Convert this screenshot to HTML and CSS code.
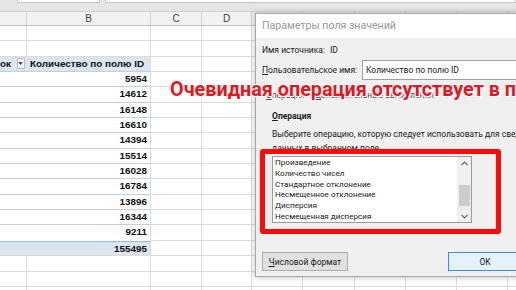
FILE: index.html
```html
<!DOCTYPE html>
<html lang="ru">
<head>
<meta charset="utf-8">
<title>Параметры поля значений</title>
<link rel="stylesheet" href="styles.css">
</head>
<body>
<div class="screen">
  <div class="sheet">
    <div class="toolbar">
      <div class="namebox"></div>
      <div class="formula"></div>
    </div>
    <div class="row colhead">
      <div class="c"></div><div class="c">B</div><div class="c">C</div><div class="c">D</div><div class="c">E</div><div class="c">F</div><div class="c">G</div><div class="c">H</div><div class="c">I</div><div class="c">J</div>
    </div>
    <div class="row"><div class="c"></div><div class="c"></div><div class="c"></div><div class="c"></div><div class="c"></div><div class="c"></div><div class="c"></div><div class="c"></div><div class="c"></div><div class="c"></div></div>
    <div class="row"><div class="c"></div><div class="c"></div><div class="c"></div><div class="c"></div><div class="c"></div><div class="c"></div><div class="c"></div><div class="c"></div><div class="c"></div><div class="c"></div></div>
    <div class="row pivot phead"><div class="c a">ок <span class="dd"><svg width="5" height="3" viewBox="0 0 5 3"><path d="M0 0H5L2.5 3Z" fill="#555"/></svg></span></div><div class="c b">Количество по полю ID</div><div class="c"></div><div class="c"></div><div class="c"></div><div class="c"></div><div class="c"></div><div class="c"></div><div class="c"></div><div class="c"></div></div>
    <div class="row pivot"><div class="c a"></div><div class="c b num">5954</div><div class="c"></div><div class="c"></div><div class="c"></div><div class="c"></div><div class="c"></div><div class="c"></div><div class="c"></div><div class="c"></div></div>
    <div class="row pivot"><div class="c a"></div><div class="c b num">14612</div><div class="c"></div><div class="c"></div><div class="c"></div><div class="c"></div><div class="c"></div><div class="c"></div><div class="c"></div><div class="c"></div></div>
    <div class="row pivot"><div class="c a"></div><div class="c b num">16148</div><div class="c"></div><div class="c"></div><div class="c"></div><div class="c"></div><div class="c"></div><div class="c"></div><div class="c"></div><div class="c"></div></div>
    <div class="row pivot"><div class="c a"></div><div class="c b num">16610</div><div class="c"></div><div class="c"></div><div class="c"></div><div class="c"></div><div class="c"></div><div class="c"></div><div class="c"></div><div class="c"></div></div>
    <div class="row pivot"><div class="c a"></div><div class="c b num">14394</div><div class="c"></div><div class="c"></div><div class="c"></div><div class="c"></div><div class="c"></div><div class="c"></div><div class="c"></div><div class="c"></div></div>
    <div class="row pivot"><div class="c a"></div><div class="c b num">15514</div><div class="c"></div><div class="c"></div><div class="c"></div><div class="c"></div><div class="c"></div><div class="c"></div><div class="c"></div><div class="c"></div></div>
    <div class="row pivot"><div class="c a"></div><div class="c b num">16028</div><div class="c"></div><div class="c"></div><div class="c"></div><div class="c"></div><div class="c"></div><div class="c"></div><div class="c"></div><div class="c"></div></div>
    <div class="row pivot"><div class="c a"></div><div class="c b num">16784</div><div class="c"></div><div class="c"></div><div class="c"></div><div class="c"></div><div class="c"></div><div class="c"></div><div class="c"></div><div class="c"></div></div>
    <div class="row pivot"><div class="c a"></div><div class="c b num">13896</div><div class="c"></div><div class="c"></div><div class="c"></div><div class="c"></div><div class="c"></div><div class="c"></div><div class="c"></div><div class="c"></div></div>
    <div class="row pivot"><div class="c a"></div><div class="c b num">16344</div><div class="c"></div><div class="c"></div><div class="c"></div><div class="c"></div><div class="c"></div><div class="c"></div><div class="c"></div><div class="c"></div></div>
    <div class="row pivot plast"><div class="c a"></div><div class="c b num">9211</div><div class="c"></div><div class="c"></div><div class="c"></div><div class="c"></div><div class="c"></div><div class="c"></div><div class="c"></div><div class="c"></div></div>
    <div class="row pivot ptotal"><div class="c a"></div><div class="c b num">155495</div><div class="c"></div><div class="c"></div><div class="c"></div><div class="c"></div><div class="c"></div><div class="c"></div><div class="c"></div><div class="c"></div></div>
    <div class="row"><div class="c"></div><div class="c"></div><div class="c"></div><div class="c"></div><div class="c"></div><div class="c"></div><div class="c"></div><div class="c"></div><div class="c"></div><div class="c"></div></div>
    <div class="row"><div class="c"></div><div class="c"></div><div class="c"></div><div class="c"></div><div class="c"></div><div class="c"></div><div class="c"></div><div class="c"></div><div class="c"></div><div class="c"></div></div>
    <div class="row"><div class="c"></div><div class="c"></div><div class="c"></div><div class="c"></div><div class="c"></div><div class="c"></div><div class="c"></div><div class="c"></div><div class="c"></div><div class="c"></div></div>
  </div>

  <div class="dialog">
    <div class="titlebar">Параметры поля значений</div>
    <div class="dbody">
      <div class="srcline"><span class="lbl">Имя источника:</span><span>ID</span></div>
      <div class="nameline"><span class="lbl2"><u>П</u>ользовательское имя:</span><div class="input">Количество по полю ID</div></div>
      <div class="tabs"><span class="tab active"><u>О</u>перация</span><span class="tab"><u>Д</u>ополнительные вычисления</span></div>
      <div class="panel">
        <div class="group"><u>О</u>перация</div>
        <div class="desc">Выберите операцию, которую следует использовать для сведения<br>данных в выбранном поле</div>
        <div class="listwrap">
          <div class="listbox">
            <ul class="items">
              <li>Произведение</li>
              <li>Количество чисел</li>
              <li>Стандартное отклонение</li>
              <li>Несмещенное отклонение</li>
              <li>Дисперсия</li>
              <li>Несмещенная дисперсия</li>
            </ul>
            <div class="scroll">
              <svg class="arr" width="7" height="5" viewBox="0 0 7 5"><path d="M0.5 4.2L3.5 1L6.5 4.2" fill="none" stroke="#606060" stroke-width="1.1"/></svg>
              <div class="track"><div class="thumb"></div></div>
              <svg class="arr" width="7" height="5" viewBox="0 0 7 5"><path d="M0.5 0.8L3.5 4L6.5 0.8" fill="none" stroke="#606060" stroke-width="1.1"/></svg>
            </div>
          </div>
          <div class="redframe"></div>
        </div>
      </div>
      <div class="buttons">
        <button class="btn"><u>Ч</u>исловой формат</button>
        <button class="btn ok">OK</button>
      </div>
    </div>
  </div>

  <div class="callout">Очевидная операция отсутствует в панели</div>
</div>
</body>
</html>
```
FILE: styles.css
```css
* { box-sizing: border-box; }
html, body { margin: 0; padding: 0; }
body { width: 516px; height: 290px; overflow: hidden; background: #fff; }

.screen {
  position: relative;
  width: 516px;
  height: 290px;
  overflow: hidden;
  font-family: "Liberation Sans", Arial, sans-serif;
}

/* ---------- spreadsheet ---------- */
.sheet { width: 516px; }

.toolbar {
  height: 12px;
  background: #e6e6e6;
  display: flex;
  gap: 5px;
  padding-left: 17px;
  border-bottom: 1px solid #d0d0d0;
}
.namebox, .formula {
  height: 3px;
  background: #fff;
  border: 1px solid #c6c6c6;
  border-top: none;
}
.namebox { width: 83px; }
.formula { flex: 1; }

.row {
  display: grid;
  grid-template-columns: 27px 124px 51px 50px 51px 52px 51px 51px 51px 51px;
  height: 15.35px;
}
.row .c {
  border-right: 1px solid #dcdcdc;
  border-bottom: 1px solid #dcdcdc;
  overflow: hidden;
  white-space: nowrap;
}

.colhead { height: 14px; background: #f2f2f2; }
.colhead .c {
  border-right: 1px solid #d2d2d2;
  border-bottom: 1px solid #c4c4c4;
  text-align: center;
  font-size: 10px;
  line-height: 14px;
  color: #444;
}

.pivot .c.a { border-right: none; border-bottom-color: #bcd0e8; }
.pivot .c.b { border-bottom-color: #bcd0e8; }
.pivot .c {
  font-size: 9.9px;
  font-weight: bold;
  line-height: 14px;
  color: #111;
}
.num { text-align: right; padding-right: 3px; }

.phead .c.a, .phead .c.b { background: #dce6f1; }
.phead .c.a {
  display: flex;
  align-items: center;
  gap: 6px;
  padding-left: 0;
}
.phead .c.b { padding-left: 3px; }
.dd {
  width: 8px;
  height: 11px;
  border: 1px solid #c0c0c0;
  background: #f5f5f5;
  display: flex;
  align-items: center;
  justify-content: center;
}
.ptotal .c.a, .ptotal .c.b { background: #dce6f1; border-top: 1px solid #9bb7da; }
.ptotal .c.a { border-bottom-color: #dcdcdc; }
.ptotal .c.b { border-bottom-color: #dcdcdc; }
.plast .c.a, .plast .c.b { border-bottom: none; }

/* ---------- dialog ---------- */
.dialog {
  position: absolute;
  left: 255px;
  top: 13px;
  width: 300px;
  height: 264px;
  background: #f0f0f0;
  border: 1px solid #a8a8a8;
  box-shadow: 0 0 6px rgba(0, 0, 0, 0.25);
  font-family: Roboto, "Liberation Sans", sans-serif;
  font-size: 8.5px;
  color: #1a1a1a;
  display: flex;
  flex-direction: column;
  white-space: nowrap;
}
.titlebar {
  height: 24px;
  background: #fff;
  padding-left: 6px;
  line-height: 24px;
  font-size: 10.6px;
  color: #9a9a9a;
}
.dbody {
  flex: 1;
  padding: 5px 0 0 6px;
  display: flex;
  flex-direction: column;
}
.srcline { display: flex; height: 14px; align-items: center; }
.lbl { width: 68px; flex: none; }
.nameline {
  display: flex;
  align-items: center;
  margin-top: 3px;
  height: 20px;
}
.lbl2 { width: 100px; flex: none; }
.input {
  flex: 1;
  height: 20px;
  background: #fff;
  border: 1px solid #a0a0a0;
  line-height: 18px;
  padding-left: 3px;
}
.tabs {
  margin-top: 8px;
  height: 15px;
  display: flex;
  gap: 10px;
  padding-left: 4px;
  font-size: 8.4px;
  color: #555;
  line-height: 15px;
}
.panel {
  padding-left: 10px;
  display: flex;
  flex-direction: column;
}
.group {
  margin-top: 6px;
  font-weight: bold;
  height: 14px;
  line-height: 14px;
}
.desc {
  margin-top: 4px;
  line-height: 14px;
}
.listwrap {
  position: relative;
  margin-top: 1px;
  width: 200px;
  height: 67px;
}
.listbox {
  width: 200px;
  height: 67px;
  background: #fff;
  border: 1px solid #9a9a9a;
  display: flex;
  position: relative;
  z-index: 1;
}
.items {
  list-style: none;
  margin: 0;
  padding: 0 0 0 2px;
  flex: 1;
  font-size: 8.1px;
  line-height: 10.8px;
}
.scroll {
  width: 14px;
  background: #f0f0f0;
  display: flex;
  flex-direction: column;
  align-items: center;
  padding: 4px 0 3px;
}
.arr { display: block; flex: none; }
.track {
  flex: 1;
  width: 100%;
  padding-top: 19px;
  padding-bottom: 4px;
}
.thumb { width: 11px; margin: 0 auto; height: 21px; background: #cdcdcd; }
.redframe {
  position: absolute;
  left: -12px;
  top: -7px;
  right: -29px;
  bottom: -11px;
  border: 5px solid #ff0a0a;
  border-radius: 3px;
  z-index: 2;
}

.buttons {
  margin-top: auto;
  margin-bottom: 5px;
  display: flex;
  gap: 100px;
  height: 19px;
}
.btn {
  font-family: Roboto, "Liberation Sans", sans-serif;
  font-size: 8.5px;
  color: #1a1a1a;
  height: 19px;
  padding: 0;
  background: #e1e1e1;
  border: 1px solid #adadad;
  width: 86px;
  flex: none;
}
.btn.ok {
  width: 74px;
  border: 1px solid #3c8ddb;
  background: #e5f1fb;
}

/* ---------- callout ---------- */
.callout {
  position: absolute;
  left: 170px;
  top: 78px;
  white-space: nowrap;
  font-family: Roboto, "Liberation Sans", sans-serif;
  font-weight: bold;
  font-size: 19.8px;
  color: #e8151f;
  text-shadow: 1px 0 0 #fff, -1px 0 0 #fff, 0 1px 0 #fff, 0 -1px 0 #fff, 1px 1px 0 #fff, -1px -1px 0 #fff, 1px -1px 0 #fff, -1px 1px 0 #fff;
}
```
